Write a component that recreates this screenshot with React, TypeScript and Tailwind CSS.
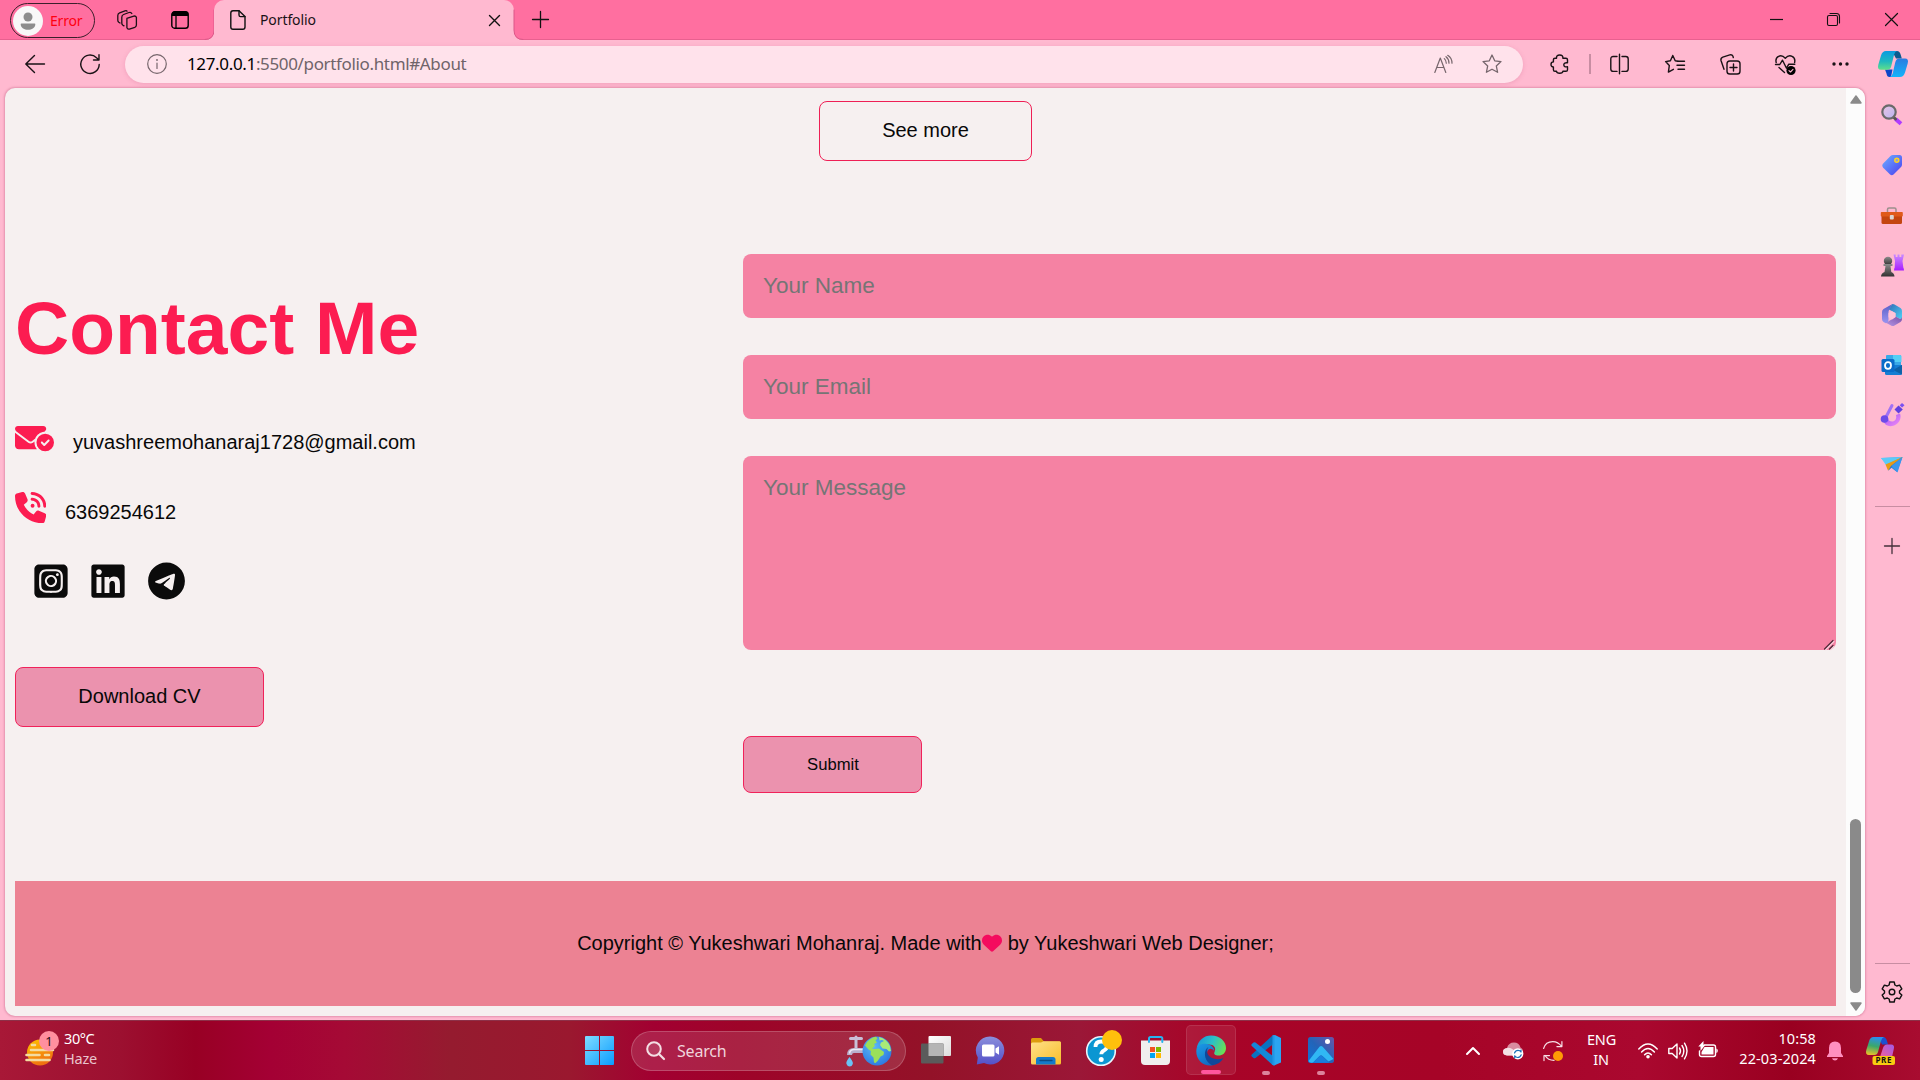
import type { ReactNode } from "react";
import {
  FaEnvelopeCircleCheck,
  FaPhoneVolume,
  FaSquareInstagram,
  FaLinkedin,
  FaTelegram,
  FaHeart,
} from "react-icons/fa6";

type IconProps = { w: number; h: number; className?: string; children: ReactNode };

/* Pixel-grid icon canvas: one user unit is one CSS pixel. */
function Icon({ w, h, className = "", children }: IconProps) {
  return (
    <svg
      width={w}
      height={h}
      viewBox={`0 0 ${w} ${h}`}
      fill="none"
      stroke="none"
      strokeLinecap="round"
      strokeLinejoin="round"
      className={`block shrink-0 overflow-visible ${className}`}
    >
      {children}
    </svg>
  );
}

const ui = "font-['Noto_Sans','Open_Sans',sans-serif]";

function TitleBar() {
  return (
    <header className="flex h-10 items-start border-b border-[#e8608f] bg-[#ff6fa0]">
      <div className="mt-[3px] ml-[10px] flex h-[35px] w-[85px] items-center rounded-full border border-[#3b1f2b] pl-[2px]">
        <Icon w={30} h={30}>
          <circle cx="15" cy="15" r="15" fill="#f8f8f8" />
          <circle cx="15" cy="11" r="4.500" fill="#8d8d8d" />
          <path d="M8.500 17.500h13q1 0 .8 1.200c-.6 3.400-3.400 5-7.300 5s-6.700-1.600-7.300-5q-.2-1.200.8-1.200z" fill="#8d8d8d" />
        </Icon>
        <span className="ml-[7px] text-[14px] leading-none tracking-[-0.2px] text-[#ff0010]">Error</span>
      </div>
      <Icon w={21} h={20} className="mt-[10px] ml-[22px]">
        <g stroke="#1d1016" strokeWidth="1.300">
          <path d="M9.800 8.300l7-2.200q1.800-.5 2.600 1.200v7.800q0 1.700-1.600 2.300l-5.400 1.700q-2 .5-2.500-1.500V9.300q0-.7.5-1z" />
          <path d="M7 15.800l-1-.5q-1.200-.8-1.200-2V7.200q0-2 1.800-2.700l5.400-2q2-.7 2.800 1" />
          <path d="M3 13l-1.200-.8q-1-.8-1-2V5.600q0-2 1.800-2.700L8 .9q1.500-.5 2 .3" />
        </g>
      </Icon>
      <Icon w={18} h={18} className="mt-[11px] ml-[33px]">
        <rect x="0.800" y="0.800" width="16.400" height="16.400" rx="2.800" stroke="#000" strokeWidth="1.400" />
        <path d="M.8 5V3Q.8.500 3.300.500h11.400q2.500 0 2.500 2.500v2z" fill="#000" />
        <path d="M5 5v12" stroke="#000" strokeWidth="1.300" strokeLinecap="butt" />
      </Icon>

      <div className="ml-[15px] flex h-10 w-[320px] items-start">
        <Icon w={10} h={40}>
          <path d="M10 30v10H0q10 0 10-10z" fill="#ffb9d0" />
          <path d="M10 10v20q0 9.500-9 9.500" stroke="#dc5788" strokeWidth="1" />
        </Icon>
        <div className="flex h-10 w-[300px] items-start rounded-t-[10px] bg-[#ffb9d0]">
          <Icon w={16} h={20} className="mt-[10px] ml-[16px]">
            <path d="M.8 3q0-2.200 2.200-2.200h6l6 5.800V17q0 2.200-2.200 2.200H3Q.8 19.200.8 17z" stroke="#111" strokeWidth="1.400" />
            <path d="M9 .8v4.200q0 1.600 1.600 1.600H15" stroke="#111" strokeWidth="1.400" />
          </Icon>
          <span className="mt-[11px] ml-[14px] w-[218px] text-[14px] leading-[18px] tracking-[-0.1px] text-[#1a1216]">
            Portfolio
          </span>
          <Icon w={11} h={11} className="mt-[15px] ml-[11px]">
            <path d="M.5.500l10 10M10.500.500l-10 10" stroke="#111" strokeWidth="1.400" />
          </Icon>
        </div>
        <Icon w={10} h={40}>
          <path d="M0 30v10h10Q0 40 0 30z" fill="#ffb9d0" />
          <path d="M0 10v20q0 9.500 9 9.500" stroke="#dc5788" strokeWidth="1" />
        </Icon>
      </div>
      <Icon w={17} h={17} className="mt-[11px] ml-[8px]">
        <path d="M8.500 .5v16M.5 8.500h16" stroke="#111" strokeWidth="1.300" />
      </Icon>

      <Icon w={13} h={13} className="mt-[13px] ml-auto">
        <path d="M0 6.500h13" stroke="#111" strokeWidth="1.200" strokeLinecap="butt" />
      </Icon>
      <Icon w={13} h={13} className="mt-[13px] ml-[44px]">
        <rect x="0.500" y="2.500" width="10" height="10" rx="1.500" stroke="#111" strokeWidth="1.100" />
        <path d="M3 .5h6.500q3 0 3 3V10" stroke="#111" strokeWidth="1.100" />
      </Icon>
      <Icon w={13} h={13} className="mt-[13px] mr-[22px] ml-[45px]">
        <path d="M.5.500l12 12M12.500.500l-12 12" stroke="#111" strokeWidth="1.200" />
      </Icon>
    </header>
  );
}

function Toolbar() {
  return (
    <div className="flex h-12 items-center bg-[#ffb9d0]">
      <Icon w={20} h={18} className="ml-[25px]">
        <path d="M19.500 9H1M9.500.500L.8 9l8.700 8.500" stroke="#1a1216" strokeWidth="1.400" />
      </Icon>
      <Icon w={20} h={20} className="ml-[35px]">
        <path d="M19.200 10.500A9.200 9.200 0 1 1 16.500 3.700l2.300 2.100M19 .8v5.200h-5.500" stroke="#1a1216" strokeWidth="1.400" />
      </Icon>
      <div className="ml-[25px] flex h-[37px] w-[1398px] items-center rounded-full bg-[#ffe2eb] shadow-[0_1px_4px_rgba(200,90,130,0.25)]">
        <Icon w={20} h={20} className="ml-[22px]">
          <circle cx="10" cy="10" r="9.300" stroke="#76666c" strokeWidth="1.200" />
          <path d="M10 9v5.500" stroke="#76666c" strokeWidth="1.200" />
          <circle cx="10" cy="6" r="0.900" fill="#76666c" />
        </Icon>
        <span className="mt-[-2px] ml-[20px] text-[17px] leading-none tracking-[-0.350px] whitespace-nowrap text-[#6f6469]">
          <span className="text-black">127.0.0.1</span>:5500/portfolio.html#About
        </span>
        <Icon w={19} h={18} className="ml-auto">
          <g stroke="#76666c" strokeWidth="1.200">
            <path d="M.8 17.500L6.300 3l5.500 14.500M2.700 12.500h7.200" />
            <path d="M10.300 3.600q2 1.700 2 4.600M12 1.700q3 2.300 3 6.500M13.700.3Q18 3 18 8.200" />
          </g>
        </Icon>
        <Icon w={20} h={20} className="mr-[21px] ml-[29px]">
          <path d="M10 1l2.700 5.800 6.300.8-4.700 4.300 1.300 6.400L10 15.200 4.400 18.300l1.300-6.400L1 7.600l6.300-.8z" stroke="#76666c" strokeWidth="1.300" />
        </Icon>
      </div>
      <Icon w={19} h={20} className="ml-[27px]">
        <path
          d="M6.500 4.200Q6.300 1 9.700 1t3.200 3.200h3q1.600 0 1.600 1.600v3c-2.300-.4-3.700.3-3.700 2s1.400 2.400 3.700 2v2.900q0 1.600-1.600 1.600h-3q-.2 2-3.200 2t-3.200-2H5q-1.600 0-1.600-1.600v-2.800Q1 12.900 1 10.400t2.400-2.500V5.800q0-1.600 1.600-1.600z"
          stroke="#1a1216"
          strokeWidth="1.400"
        />
      </Icon>
      <div className="ml-[20px] h-5 w-[2px] bg-[#c88da2]" />
      <Icon w={19} h={20} className="ml-[19px]">
        <path d="M7 2.500H3.200Q.8 2.500.8 5v10q0 2.400 2.400 2.400H7M12 2.500h3.800q2.400 0 2.400 2.500v10q0 2.400-2.400 2.400H12M9.500.3v19.400" stroke="#1a1216" strokeWidth="1.400" />
      </Icon>
      <Icon w={20} h={20} className="ml-[36px]">
        <g stroke="#1a1216" strokeWidth="1.400">
          <path d="M12.800 7.200l-2.600-.400L7.800 1.500 5.400 6.800l-4.800.8 3.700 4-.9 6.500 5-2.800" />
          <path d="M13 7.200h6.500M12 11.200h7.500M13 15.200h6.500" />
        </g>
      </Icon>
      <Icon w={21} h={21} className="ml-[35px]">
        <g stroke="#1a1216" strokeWidth="1.400">
          <rect x="7" y="7" width="13" height="13" rx="2.800" />
          <path d="M13.500 10v7M10 13.500h7" />
          <path d="M4 15.300L1 6.500q-.5-2.500 1.800-3.300l7-2.300q2.300-.6 3.200 1.400l.3 1.300" />
        </g>
      </Icon>
      <Icon w={21} h={21} className="ml-[34px]">
        <g stroke="#1a1216" strokeWidth="1.400">
          <path d="M1.200 8.500C-.3 2.500 6 -.5 10.300 4.200c4.300-4.700 10.700-1.700 9.300 4.300" />
          <path d="M.5 10.500h4.300L7.500 6.200l4 8 2.300-4h6M4 13.500l5.500 5" />
        </g>
        <circle cx="16" cy="16.500" r="4.600" fill="#000" />
        <path d="M14 16.600l1.500 1.400 2.500-2.600" stroke="#ffb9d0" strokeWidth="1.100" />
      </Icon>
      <Icon w={17} h={4} className="ml-[36px]">
        <circle cx="2" cy="2" r="1.700" fill="#1a1216" />
        <circle cx="8.500" cy="2" r="1.700" fill="#1a1216" />
        <circle cx="15" cy="2" r="1.700" fill="#1a1216" />
      </Icon>
      <Icon w={30} h={26} className="ml-[29px]">
        <defs>
          <linearGradient id="cpA" x1="0" y1="0" x2="0" y2="1">
            <stop offset="0" stopColor="#0a9be0" />
            <stop offset="0.550" stopColor="#1fb8c0" />
            <stop offset="1" stopColor="#5fe08a" />
          </linearGradient>
          <linearGradient id="cpB" x1="0" y1="0" x2="0" y2="1">
            <stop offset="0" stopColor="#2a7be0" />
            <stop offset="1" stopColor="#12b4fb" />
          </linearGradient>
        </defs>
        <path d="M14 0h5q2.800 0 3.800 4l1 3.500H18z" fill="#0b5b90" />
        <path d="M7 18.500h7.500L13 26h-1.500q-2.500 0-3-3.500z" fill="#0b45c8" />
        <path d="M8 0h11q-2.200.5-3 4l-3 12q-.8 2.800-4 2.800H3q-4 0-2.700-5L3 4.500Q4.300 0 8 0z" fill="url(#cpA)" />
        <path d="M22 26H11.500q2.500-.5 3.200-3.500l2.500-11q1-4 4-4H27q4 0 2.700 5L27 21.500q-1.500 4.500-5 4.500z" fill="url(#cpB)" />
      </Icon>
    </div>
  );
}

function ContactPage() {
  return (
    <main className="flex h-[928px] w-[1860px] overflow-hidden rounded-[10px] bg-[#f6f0f0] shadow-[0_0_2px_1px_rgba(190,90,125,0.4)]">
      <div className="flex w-[1841px] flex-col px-[10px] font-['Liberation_Sans',Arial,sans-serif] text-[20px] leading-[23px] text-[#080808]">
        <button className="mt-[13px] h-[60px] w-[213px] self-center rounded-[8px] border border-[#ee1f55] pb-[1px]">
          See more
        </button>

        <section className="mt-[93px] grid h-[627px] grid-cols-[728px_1093px]">
          <div className="flex flex-col items-start">
            <h1 className="mt-[31px] text-[75px] leading-[86px] font-bold text-[#fc1c51]">Contact Me</h1>
            <div className="mt-[49px] flex h-[40px] items-start">
              <FaEnvelopeCircleCheck className="mt-[2px] h-[31.25px] w-[39px] text-[#fc1c51]" />
              <span className="mt-[11px] ml-[19px]">yuvashreemohanaraj1728@gmail.com</span>
            </div>
            <div className="mt-[32px] flex h-[40px] items-start">
              <FaPhoneVolume className="h-[31.25px] w-[31.25px] text-[#fc1c51]" />
              <span className="mt-[9px] ml-[18.750px]">6369254612</span>
            </div>
            <div className="mt-[30px] ml-[18.500px] flex h-[38px] items-start gap-[23.250px] text-[#0b0b0b]">
              <FaSquareInstagram className="h-[38px] w-[34px]" />
              <FaLinkedin className="h-[38px] w-[34px]" />
              <FaTelegram className="h-[38px] w-[37px]" />
            </div>
            <button className="mt-[67px] h-[60px] w-[249px] rounded-[8px] border border-[#f0225a] bg-[#eb92ae] pb-[1px]">
              Download CV
            </button>
          </div>

          <form className="flex flex-col items-start text-[22.5px] leading-[26px]">
            <input
              className="h-[64px] w-full rounded-[8px] bg-[#f582a3] px-[20px] placeholder:text-[#757575]"
              placeholder="Your Name"
            />
            <input
              className="mt-[37px] h-[64px] w-full rounded-[8px] bg-[#f582a3] px-[20px] placeholder:text-[#757575]"
              placeholder="Your Email"
            />
            <div className="relative mt-[37px] h-[194px] w-full">
              <textarea
                className="block h-full w-full resize-none rounded-[8px] bg-[#f582a3] px-[20px] pt-[19px] placeholder:text-[#757575]"
                placeholder="Your Message"
              />
              <Icon w={10} h={10} className="absolute right-[2px] bottom-0">
                <path d="M1.800 9.500l8-8M6.800 9.500l3-3" stroke="#fbd3df" strokeWidth="1.400" />
                <path d="M.5 9L9 .5M5.500 9L9 5.500" stroke="#4f2a38" strokeWidth="1.200" />
              </Icon>
            </div>
            <button
              type="button"
              className="mt-[86px] h-[57px] w-[179px] rounded-[8px] border border-[#f0225a] bg-[#eb92ae] pl-[1px] text-[16.67px] leading-[19px]"
            >
              Submit
            </button>
          </form>
        </section>

        <footer className="flex h-[125px] items-center justify-center bg-[#ec8293]">
          <span>Copyright © Yukeshwari Mohanraj. Made with</span>
          <FaHeart className="mt-[-2px] mr-[6px] h-[20px] w-[20px] text-[#f40b5e]" />
          <span>by Yukeshwari Web Designer;</span>
        </footer>
      </div>

      <div className="flex w-[19px] flex-col items-center bg-[#fcfcfc]">
        <Icon w={12} h={9} className="mt-[7px]">
          <path d="M6 1l5 7H1z" fill="#8a8a8a" stroke="#8a8a8a" strokeWidth="1.500" />
        </Icon>
        <div className="mt-[715px] h-[174px] w-[11px] rounded-full bg-[#8a8a8a]" />
        <Icon w={12} h={9} className="mt-[9px]">
          <path d="M6 8l5-7H1z" fill="#8a8a8a" stroke="#8a8a8a" strokeWidth="1.500" />
        </Icon>
      </div>
    </main>
  );
}

function Sidebar() {
  return (
    <aside className="flex w-[55px] flex-col items-center pr-[1px]">
      <svg width="0" height="0" className="absolute">
        <defs>
          <linearGradient id="sbTag" x1="0" y1="0" x2="1" y2="1">
            <stop offset="0" stopColor="#6db1ff" />
            <stop offset="1" stopColor="#4a3cf0" />
          </linearGradient>
          <linearGradient id="sbPurple" x1="0" y1="0" x2="0" y2="1">
            <stop offset="0" stopColor="#c98cff" />
            <stop offset="1" stopColor="#a91cff" />
          </linearGradient>
          <linearGradient id="sbDark" x1="0" y1="0" x2="0" y2="1">
            <stop offset="0" stopColor="#8b8b8b" />
            <stop offset="1" stopColor="#333" />
          </linearGradient>
          <linearGradient id="sbM1" x1="0" y1="0" x2="0" y2="1">
            <stop offset="0" stopColor="#5a5fc8" />
            <stop offset="1" stopColor="#9a94f0" />
          </linearGradient>
          <linearGradient id="sbM2" x1="0" y1="0" x2="1" y2="1">
            <stop offset="0" stopColor="#2f6fb8" />
            <stop offset="1" stopColor="#4fd0f5" />
          </linearGradient>
          <linearGradient id="sbM3" x1="0" y1="1" x2="1" y2="0">
            <stop offset="0" stopColor="#b79ae8" />
            <stop offset="1" stopColor="#7a4fa8" />
          </linearGradient>
          <linearGradient id="sbBrush" x1="0" y1="0" x2="1" y2="1">
            <stop offset="0" stopColor="#9a55f5" />
            <stop offset="1" stopColor="#f58bf5" />
          </linearGradient>
          <linearGradient id="sbSend" x1="0" y1="0" x2="1" y2="1">
            <stop offset="0" stopColor="#4cc3f7" />
            <stop offset="1" stopColor="#1a6fdc" />
          </linearGradient>
          <linearGradient id="sbLens" x1="0" y1="0" x2="1" y2="1">
            <stop offset="0" stopColor="#eac4e4" />
            <stop offset="1" stopColor="#b8b4f0" />
          </linearGradient>
        </defs>
      </svg>
      <Icon w={22} h={22} className="mt-[16px]">
        <path d="M14.500 15l5.500 4.800" stroke="#b03bff" strokeWidth="4" strokeLinecap="butt" />
        <path d="M12.500 13.200l2 1.800" stroke="#555" strokeWidth="3" />
        <circle cx="8" cy="8" r="6.700" fill="url(#sbLens)" stroke="#6a6a6a" strokeWidth="2.200" />
      </Icon>
      <Icon w={22} h={22} className="mt-[28px]">
        <path d="M2.200 9.500L9.500 2q1-1 2.500-1h6.500q2.500 0 2.500 2.500v7q0 1.500-1 2.500l-7.500 7.500q-1.700 1.500-3.400 0L2.200 13.700q-1.900-2.200 0-4.200z" fill="url(#sbTag)" />
        <circle cx="15.800" cy="6.300" r="2" fill="#8aa0d8" stroke="#ffd21f" strokeWidth="1.500" />
      </Icon>
      <Icon w={24} h={20} className="mt-[30px]">
        <path d="M7.500 6V3.500Q7.500 2 9 2h5.500Q16 2 16 3.500V6" stroke="#9c8f8c" strokeWidth="1.500" />
        <rect x="1.500" y="6" width="20.500" height="12" rx="1.500" fill="#c44510" />
        <rect x="0.800" y="6" width="22" height="4.500" rx="0.800" fill="#e05a1b" />
        <rect x="9.800" y="9" width="4" height="4.500" rx="1" fill="#dcd6d2" />
      </Icon>
      <Icon w={24} h={24} className="mt-[28px]">
        <path d="M13.500.500h2.200V3h1.800V.5h2V3h1.800V.500H24L22.500 7l.8 6.500q.7 1 .7 3h-10q0-2 .7-3L15 7z" fill="url(#sbPurple)" />
        <circle cx="8" cy="7" r="4.200" fill="url(#sbDark)" />
        <path d="M3.500 10h9v2h-2l.8 6q3 1 3.200 4.500H1Q1.200 19 4.500 18l1-6h-2z" fill="url(#sbDark)" />
      </Icon>
      <Icon w={22} h={24} className="mt-[25px]">
        <path d="M11 1.200L2.500 6Q1 7 1 9v7q0 2 1.500 3l2.300 1.300Q7.500 20 7.500 17V9q0-1.500 1-2.500z" fill="url(#sbM1)" />
        <path d="M11 1.200q1.200-.5 2.500.3l6 3.500q1.500 1 1.500 3v6.500q-.5 2-2 1.500l-4.500-2.500V10L8 6.500z" fill="url(#sbM2)" />
        <path d="M21 14v2q0 2-1.500 3l-6 3.500q-1.800 1-3.500 0l-6-3.300q2.500.8 4-1.200l3.500-2 3-2.500 4.500 2.500q1.500.5 2-2z" fill="url(#sbM3)" />
        <path d="M11 8.200l3.500 2v4l-3.500 2.200-3.500-2.200v-4z" fill="#ffc4d8" />
      </Icon>
      <Icon w={22} h={22} className="mt-[27px]">
        <rect x="5" y="1" width="15" height="14" rx="1" fill="#39a9e8" />
        <path d="M12 1h7q1.500 0 1.500 1.500V8H12z" fill="#54cff5" />
        <path d="M4 11h17v8.500q0 1.500-1.500 1.500h-14Q4 21 4 19.500z" fill="#167ed3" />
        <path d="M21 11v9.500L12 16z" fill="#0e62a8" />
        <rect x="0.500" y="5" width="13" height="13" rx="1.500" fill="#0a6cc9" />
        <ellipse cx="7" cy="11.500" rx="3" ry="3.300" stroke="#fff" strokeWidth="1.800" />
      </Icon>
      <Icon w={24} h={24} className="mt-[27px]">
        <path d="M4 15c-2 7 6 10.500 12 6.500 4-2.500 5.500-7 4-11l-4 1.500c1 4-1 6.500-4 6.500-2.500 0-4-1.500-4-4z" fill="url(#sbBrush)" />
        <path d="M12 2.500L6 14" stroke="#a072f5" strokeWidth="3" />
        <circle cx="4.500" cy="16" r="3.800" fill="#6b4be8" />
        <path d="M18.500 2.500l4.300 4-4.300 4-4-4z" fill="#6040e0" />
        <path d="M22 0l2.500 2.300L22 4.600l-2.300-2.300z" fill="#7a50f0" />
      </Icon>
      <Icon w={24} h={20} className="mt-[28px]">
        <path d="M1 3l21.500-1L17 17 9 11z" fill="url(#sbSend)" />
        <path d="M1 3l21.500-1L6 10z" fill="#5ccaf8" />
        <path d="M22.500 2L5.500 9.500l2.500 6z" fill="#e89a14" />
        <path d="M22.500 2L11 11l-3 5z" fill="#1d78d8" />
        <path d="M22.500 2L11.500 11l6 6.500z" fill="#3b96ec" />
      </Icon>
      <div className="mt-[31px] h-px w-[35px] bg-[#c88da2]" />
      <Icon w={16} h={16} className="mt-[31px]">
        <path d="M8 .5v15M.5 8h15" stroke="#44303a" strokeWidth="1.300" />
      </Icon>
      <div className="mt-auto h-px w-[35px] bg-[#c88da2]" />
      <Icon w={22} h={22} className="mt-[17px] mb-[17px]">
        <path
          d="M8.800 1h4.400l.7 3 1.800 1 2.900-.9 2.200 3.800-2.300 2.100v2l2.300 2.100-2.200 3.800-2.900-.9-1.800 1-.7 3H8.800l-.7-3-1.800-1-2.900.9-2.200-3.800L3.500 12v-2L1.200 7.900l2.200-3.800 2.900.9 1.800-1z"
          stroke="#111"
          strokeWidth="1.400"
        />
        <circle cx="11" cy="11" r="2.800" stroke="#111" strokeWidth="1.400" />
      </Icon>
    </aside>
  );
}

function SearchBox() {
  return (
    <div className="ml-[17px] flex h-[40px] w-[275px] items-center rounded-full border border-white/20 bg-white/12">
      <Icon w={19} h={19} className="ml-[14px]">
        <circle cx="8" cy="8" r="6.800" stroke="#f3dfe4" strokeWidth="2" fill="#ffffff20" />
        <path d="M13 13l5 5" stroke="#f3dfe4" strokeWidth="2.200" />
      </Icon>
      <span className="ml-[12px] text-[16px] leading-none tracking-[-0.2px] text-[#f0d5dc]">Search</span>
      <Icon w={48} h={32} className="mr-[12px] ml-auto">
        <defs>
          <radialGradient id="globe" cx="0.400" cy="0.350" r="0.700">
            <stop offset="0" stopColor="#5cb8f8" />
            <stop offset="1" stopColor="#2c78e0" />
          </radialGradient>
        </defs>
        <path d="M5.500 3.500h11M11 2v12" stroke="#c9bfd8" strokeWidth="3" />
        <path d="M20 15.500H9q-4.500 0-4.500 4.500" stroke="#b9aecb" strokeWidth="5" strokeLinecap="butt" />
        <path d="M20 14.500H9q-4 0-4.500 4" stroke="#ece8f4" strokeWidth="1.500" strokeLinecap="butt" />
        <path d="M4.500 22q-4 5-3 7 1 2.500 3.200 2.500T7.800 29Q8.500 27 4.500 22z" fill="#6ac3f5" />
        <circle cx="32" cy="16" r="14.500" fill="url(#globe)" />
        <path d="M22 7q4-4.500 9-5.200l1.500 1.700-2 2 1.500 2-3 1.500 1 2-3 2.500 3 .5 4-.5 5 3.500-.5 3-3 1.500-2.500 4-2.500 2.500-1.500-.5-.5-5-3-3 .5-3.500-2.500-1.500-3.500-4z" fill="#9be05a" />
        <path d="M34 2q8 2 11 9l1 5-2 .5-2.500-2.500-4-.5-2.500-3.500 1-2.500 3-1.500-2-1-2.500.5z" fill="#a9ea78" />
      </Icon>
    </div>
  );
}

function TaskbarApps() {
  return (
    <>
      <Icon w={29} h={29} className="ml-[488px]">
        <defs>
          <linearGradient id="win" x1="0" y1="0" x2="1" y2="1">
            <stop offset="0" stopColor="#7fdcff" />
            <stop offset="1" stopColor="#0a9cff" />
          </linearGradient>
        </defs>
        <path d="M1 0h13v14H0V1q0-1 1-1zM15 0h13q1 0 1 1v13H15zM0 15h14v14H1q-1 0-1-1zM15 15h14v13q0 1-1 1H15z" fill="url(#win)" />
      </Icon>
      <SearchBox />
      <Icon w={30} h={28} className="mt-[-2px] ml-[15px]">
        <defs>
          <linearGradient id="tv" x1="0" y1="0" x2="1" y2="1">
            <stop offset="0" stopColor="#fff" />
            <stop offset="1" stopColor="#dcdcdc" />
          </linearGradient>
        </defs>
        <rect x="7.500" y="0" width="22.500" height="20" rx="1" fill="url(#tv)" />
        <rect x="0" y="7.500" width="22.500" height="20" rx="1" fill="#5b5b5b" />
        <rect x="7.500" y="7.500" width="15" height="12.500" fill="#b5b5b5" />
      </Icon>
      <Icon w={29} h={29} className="mt-[-1px] ml-[25px]">
        <defs>
          <linearGradient id="chat" x1="0" y1="0" x2="0" y2="1">
            <stop offset="0" stopColor="#8a8fdc" />
            <stop offset="1" stopColor="#5450c8" />
          </linearGradient>
        </defs>
        <path d="M14.500.500a14 14 0 1 1-6.500 26.500L.8 28.500l1-7A14 14 0 0 1 14.500.500z" fill="url(#chat)" />
        <rect x="6" y="8.500" width="12.500" height="12" rx="1.500" fill="#fff" />
        <path d="M19.500 12.500l3.500-2.300v8.600l-3.500-2.300z" fill="#fff" />
      </Icon>
      <Icon w={30} h={28} className="ml-[26px]">
        <defs>
          <linearGradient id="fold" x1="0" y1="0" x2="1" y2="1">
            <stop offset="0" stopColor="#ffe08a" />
            <stop offset="1" stopColor="#f8bf2a" />
          </linearGradient>
        </defs>
        <path d="M0 2.500Q0 1 1.500 1H10l3 3.500h15.500q1.500 0 1.500 1.500v5H0z" fill="#dd9b0d" />
        <path d="M0 7q0-1.500 1.500-1.500H10l2.500-1.300h16q1.500 0 1.500 1.500V26q0 1.500-1.500 1.500h-27Q0 27.500 0 26z" fill="url(#fold)" />
        <path d="M5 27.500v-5q0-2.500 2.500-2.500H22q2.500 0 2.500 2.500v5z" fill="#137bcb" />
        <path d="M9 23.500h12" stroke="#0b4c86" strokeWidth="1.300" />
      </Icon>
      <Icon w={36} h={36} className="mt-[-6px] ml-[25px]">
        <circle cx="15" cy="21" r="14.300" fill="#0b96d2" stroke="#e8f6fc" strokeWidth="1.600" />
        <path d="M9.500 17q0-5.500 5.700-5.500 5.800 0 5.800 4.500 0 2.800-2.800 4.300-2.900 1.500-2.900 4" stroke="#fff" strokeWidth="3.800" strokeLinecap="butt" />
        <circle cx="15.200" cy="29.500" r="2.500" fill="#fff" />
        <circle cx="26" cy="10" r="10" fill="#ffc00c" />
      </Icon>
      <Icon w={29} h={29} className="ml-[19px]">
        <path d="M8 6V2.500Q8 1 9.500 1h10.300q1.500 0 1.500 1.500V6" stroke="#27b3ef" strokeWidth="2" />
        <path d="M0 4.500h29V25q0 4-4 4H4q-4 0-4-4z" fill="#f0eeee" />
        <path d="M8 4.500V6M21.300 4.500V6" stroke="#27b3ef" strokeWidth="2" />
        <rect x="9" y="11" width="5" height="5" fill="#f25022" />
        <rect x="15" y="11" width="5" height="5" fill="#7fba00" />
        <rect x="9" y="17" width="5" height="5" fill="#00a4ef" />
        <rect x="15" y="17" width="5" height="5" fill="#ffb900" />
      </Icon>
      <div className="mt-[-1px] ml-[16px] flex h-[50px] w-[50px] flex-col items-center rounded-[5px] border border-white/10 bg-white/8 pt-[9px]">
        <Icon w={30} h={31}>
          <defs>
            <linearGradient id="edgeTop" x1="0" y1="0.300" x2="1" y2="0.600">
              <stop offset="0" stopColor="#1b96d8" />
              <stop offset="0.500" stopColor="#2bc0c8" />
              <stop offset="1" stopColor="#6be052" />
            </linearGradient>
            <linearGradient id="edgeLow" x1="0" y1="0" x2="0.600" y2="1">
              <stop offset="0" stopColor="#1b9ae6" />
              <stop offset="1" stopColor="#1068c0" />
            </linearGradient>
          </defs>
          <path d="M.5 14C2 5 8 .5 15 .5c9 0 15 6 15 12.500 0 5-3.500 7.500-7.500 7.500-3.500 0-5-1.500-4-3.500 2-4-.5-7.500-5.500-7.500C7 9.500 1.500 11 .5 14z" fill="url(#edgeTop)" />
          <path d="M.3 16C.5 10 6 8 11 9c4.500.8 7.500 4 7.200 7-2.500-3.500-6.500-2.500-7.200 1.500-.8 5 5 8.500 13 7-2 3.500-5.500 6-10 6C6.500 30.500 0 24.500.300 16z" fill="url(#edgeLow)" />
          <path d="M12.500 12c-5 2.500-5 12.500 1.500 17 1 .8 2 1.200 3 1.200 4.500-.7 8-3 10.500-7.200-6.500 2.800-14 .5-16-4.500-.8-2-.5-4.500 1-6.500z" fill="#10489a" />
        </Icon>
        <div className="mt-[4px] h-[4px] w-[20px] shrink-0 rounded-full bg-[#ff569e]" />
      </div>
      <div className="ml-[15px] flex h-[50px] w-[30px] flex-col items-center pt-[9px]">
        <Icon w={30} h={31}>
          <path d="M21.500.500L24 0l6 3v24.500L23 30.500l-2-1z" fill="#2ba5f2" />
          <path d="M21.500.500L.8 19.500q-1 1 0 2l1.700 1.500q1 .7 2 0L23 8.500z" fill="#0a72c0" />
          <path d="M21.500 30L.8 11q-1-1 0-2L2.500 7.500q1-.7 2 0L23 22z" fill="#1487d8" />
          <path d="M21.500.500L23.500 0v30.500l-2-.5z" fill="#2196e6" />
        </Icon>
        <div className="mt-[5px] h-[4px] w-[8px] shrink-0 rounded-full bg-[#dc849c]" />
      </div>
      <div className="ml-[27px] flex h-[50px] w-[26px] flex-col items-center pt-[11px]">
        <Icon w={26} h={27}>
          <defs>
            <linearGradient id="pho" x1="0" y1="1" x2="1" y2="0">
              <stop offset="0" stopColor="#0d73d8" />
              <stop offset="0.500" stopColor="#2464b8" />
              <stop offset="1" stopColor="#6b55a8" />
            </linearGradient>
          </defs>
          <rect width="26" height="26" rx="2.500" fill="url(#pho)" />
          <path d="M.5 24L11.500 9.800q1.600-1.500 3.200 0L25.500 22l-5 2.500-6-5.500q-1.500-1.300-3 0L5 25.500q-3.500 1-4.500-1.500z" fill="#30b8f4" />
          <path d="M5 25.800l6.500-6.500q1.500-1.300 3 0l6.500 6.500z" fill="#1a7fdc" />
          <circle cx="19.500" cy="4.500" r="2.500" fill="#fff" />
        </Icon>
        <div className="mt-[7px] h-[4px] w-[8px] shrink-0 rounded-full bg-[#dc849c]" />
      </div>
    </>
  );
}

function Tray() {
  return (
    <div className="ml-auto flex items-center text-[14.500px] leading-[20px] text-white">
      <Icon w={14} h={9}>
        <path d="M1 8l6-6 6 6" stroke="#fff" strokeWidth="2" />
      </Icon>
      <Icon w={21} h={18} className="ml-[23px]">
        <path d="M4 13.500q-4-.3-4-3.700T4 6q1.500-5.500 7-5.500 5 0 6.500 5 2.500 1 2.500 4t-3 4z" fill="#d98c9f" />
        <path d="M4 13.500q-4-.3-4-3.700T4 6q3-1 6 1.500l4 6z" fill="#f3dfe4" />
        <circle cx="14.800" cy="11.800" r="5.600" fill="#fff" />
        <path d="M11.500 11q1-2.700 3.500-2.700 2 0 3 1.700V8M18.200 12.800q-1 2.700-3.500 2.700-2 0-3-1.700v2" stroke="#1a6fb8" strokeWidth="1.200" />
      </Icon>
      <Icon w={20} h={20} className="ml-[19px]">
        <path d="M.6 7.500Q2.500.600 9.800.600 15 .6 18.700 5.500M18.900.600v5h-5M11 19.400Q5 19.400 2 14.500M1 19.600v-5h5.500" stroke="#f6dfe5" strokeWidth="1.200" />
        <circle cx="15" cy="15" r="5" fill="#ff9a05" />
      </Icon>
      <div className="mt-[-3px] ml-[24px] w-[28px] text-center tracking-[-0.2px]">
        <div>ENG</div>
        <div>IN</div>
      </div>
      <Icon w={20} h={16} className="ml-[23px]">
        <g stroke="#fff" strokeWidth="1.500">
          <path d="M.8 6Q10-4 19.200 6M3.600 9Q10 1.800 16.400 9M6.600 11.800Q10 8 13.400 11.800" />
        </g>
        <circle cx="10" cy="13.800" r="1.800" fill="#fff" />
      </Icon>
      <Icon w={20} h={18} className="ml-[10px]">
        <g stroke="#fff" strokeWidth="1.400">
          <path d="M.8 6.500h3.400L9 2v14l-4.800-4.500H.8z" />
          <path d="M11.500 6q2 3 0 6M14 3.500q3.700 5.500 0 11M16.500 1.200q5 7.800 0 15.600" />
        </g>
      </Icon>
      <Icon w={20} h={18} className="mt-[-2px] ml-[10px]">
        <path d="M6.500 4h9q2 0 2 2v7.500q0 2-2 2H3.500q-2 0-2-2V10" stroke="#fff" strokeWidth="1.400" />
        <path d="M6.500 6h9v7.500h-12V11z" fill="#fff" />
        <path d="M18.300 7.500q1.500.3 1.500 2.300t-1.500 2.300z" fill="#fff" />
        <path d="M5.500 0v3.800h2L2.500 10V5.500H.3z" fill="#fff" />
      </Icon>
      <div className="mt-[-5px] ml-[14px] w-[84px] text-right tracking-[0.1px] whitespace-nowrap">
        <div>10:58</div>
        <div>22-03-2024</div>
      </div>
      <Icon w={16} h={20} className="ml-[11px]">
        <path d="M8 .5q6 0 6 6.500v5l2 3v1H0v-1l2-3V7Q2 .500 8 .500z" fill="#ff8fbf" />
        <path d="M5 17.300h6q-.7 2.200-3 2.200t-3-2.200z" fill="#ff8fbf" />
      </Icon>
      <Icon w={29} h={28} className="mr-[25px] ml-[23px]">
        <defs>
          <linearGradient id="preA" x1="0.500" y1="0" x2="0.300" y2="1">
            <stop offset="0" stopColor="#2b8df0" />
            <stop offset="0.500" stopColor="#3aa86a" />
            <stop offset="1" stopColor="#e8c02a" />
          </linearGradient>
          <linearGradient id="preB" x1="0" y1="1" x2="1" y2="0">
            <stop offset="0" stopColor="#f0609a" />
            <stop offset="1" stopColor="#a05ae8" />
          </linearGradient>
        </defs>
        <path d="M13 0h4q3 0 4 4l1 3.500h-6z" fill="#1c4fd0" />
        <path d="M7.500 0H18q-2 .500-3 4l-3 11q-.8 3-3.500 3H3q-4 0-2.700-5L3 4.500Q4 0 7.500 0z" fill="url(#preA)" />
        <path d="M14 20l3-9q1-3.500 4-3.500h4q4 0 2.800 4.500L26 20z" fill="url(#preB)" />
        <rect x="6.500" y="19" width="22.500" height="9" rx="2" fill="#f8cc10" />
        <text x="17.800" y="26.300" textAnchor="middle" fontSize="8" fontWeight="700" letterSpacing="0.600" fill="#111" fontFamily="Noto Sans, sans-serif">
          PRE
        </text>
      </Icon>
    </div>
  );
}

function Taskbar() {
  return (
    <div className="flex h-[60px] items-center border-t border-[#8d3048] bg-[linear-gradient(90deg,#a81837_0px,#9c1030_120px,#980024_195px,#a40034_270px,#a50a35_345px,#951b2f_450px,#9a182f_570px,#a20031_655px,#9e0429_740px,#931228_930px,#9b1737_1080px,#a80428_1210px,#a60427_1440px,#aa082f_1640px,#990020_1790px,#a80c30_1920px)]">
      <div className="mt-[-4px] flex w-[97px] items-center">
        <div className="relative ml-[25px] h-[35px] w-[34px]">
          <Icon w={34} h={35}>
            <defs>
              <linearGradient id="haze" x1="0" y1="0" x2="0.500" y2="1">
                <stop offset="0" stopColor="#ffc400" />
                <stop offset="1" stopColor="#f07010" />
              </linearGradient>
            </defs>
            <circle cx="15" cy="21.500" r="13" fill="url(#haze)" />
            <path d="M7 14h3M6 19h22M1.500 24h13M20 24h4M1.500 29h23" stroke="#f3dca0" strokeWidth="2.600" />
          </Icon>
          <span className="absolute top-[0px] left-[14px] flex h-[20px] w-[20px] items-center justify-center rounded-full bg-[#ff8f9f] text-[13px] leading-none text-[#2a1016]">
            1
          </span>
        </div>
        <div className="mt-[-1px] ml-[5px] text-[14.500px] leading-[20px] tracking-[-0.4px] text-white">
          <div>30°C</div>
          <div className="tracking-[-0.2px] text-[#e9c3cc]">Haze</div>
        </div>
      </div>
      <TaskbarApps />
      <Tray />
    </div>
  );
}

export default function App() {
  return (
    <div className={`flex h-[1080px] w-[1920px] flex-col overflow-hidden bg-[#ffb9d0] ${ui}`}>
      <TitleBar />
      <Toolbar />
      <div className="flex h-[932px] pl-[5px]">
        <ContactPage />
        <Sidebar />
      </div>
      <Taskbar />
    </div>
  );
}
